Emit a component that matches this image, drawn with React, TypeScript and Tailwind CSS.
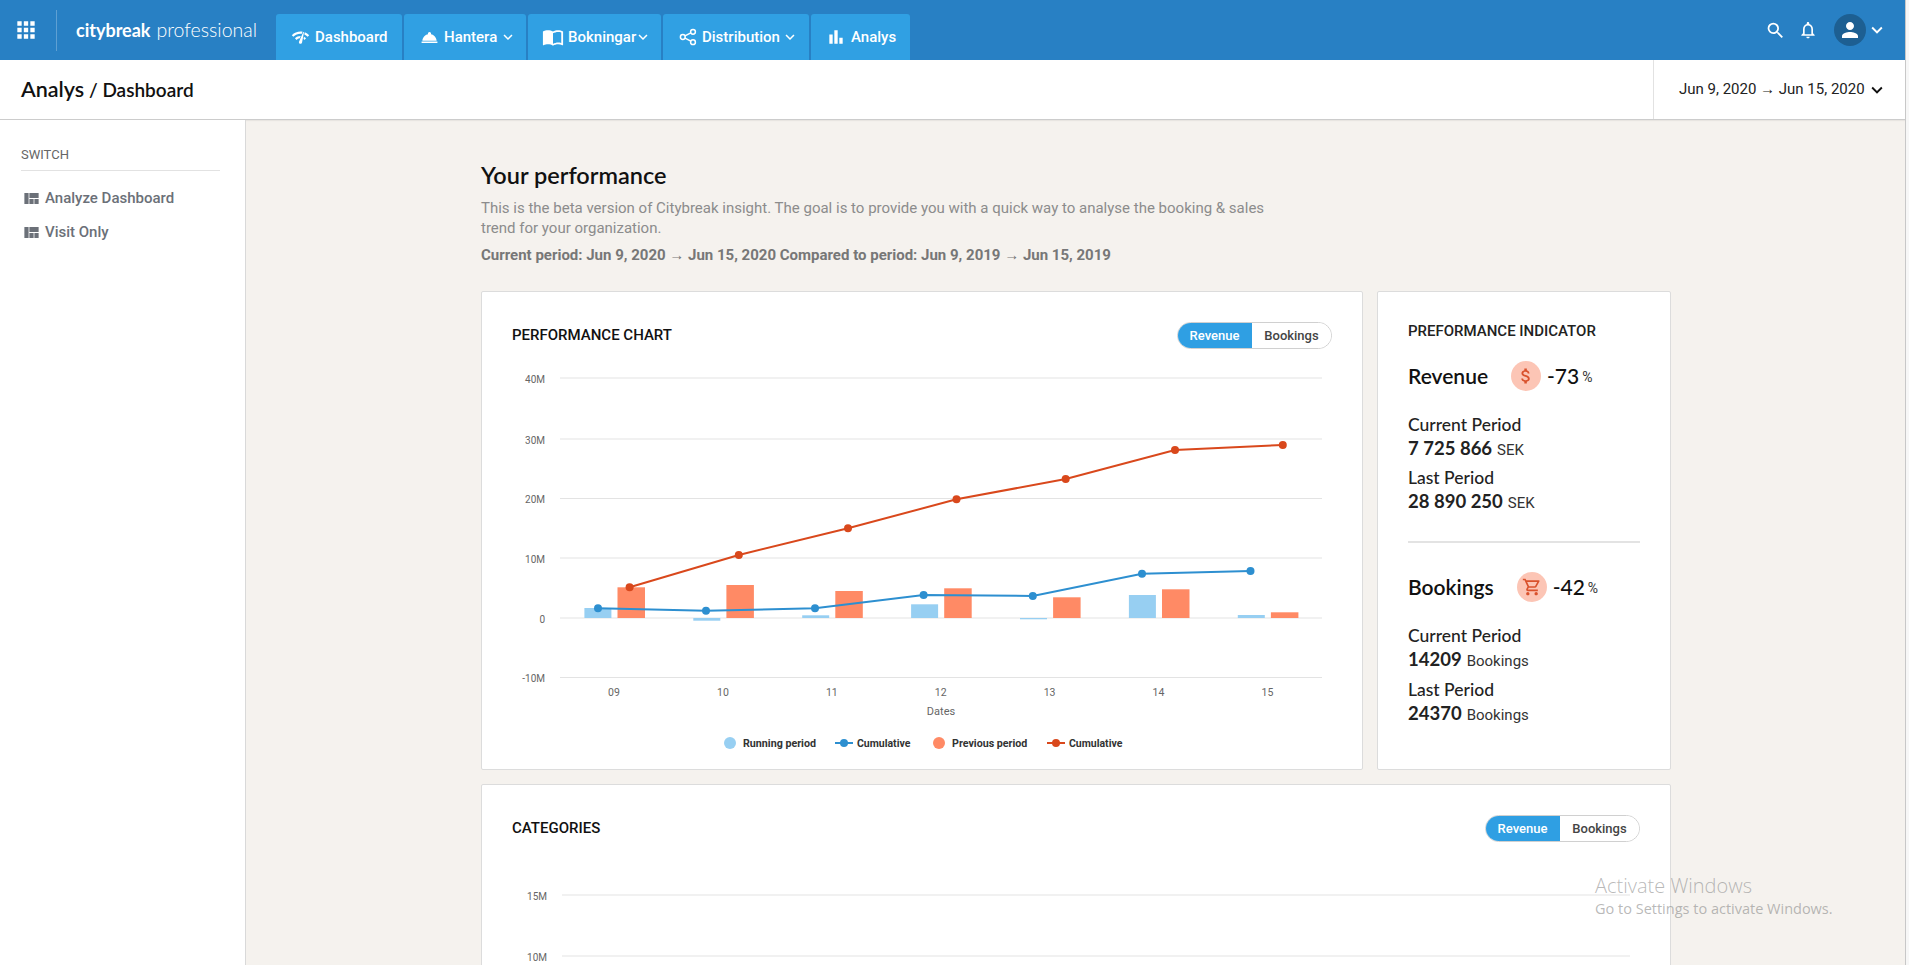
import {
  MdApps,
  MdAttachMoney,
  MdBarChart,
  MdImportContacts,
  MdKeyboardArrowDown,
  MdNetworkCheck,
  MdNotificationsNone,
  MdOutlineShoppingCart,
  MdPerson,
  MdRoomService,
  MdSearch,
  MdViewQuilt,
} from "react-icons/md"

function ShareIcon() {
  return (
    <svg viewBox="0 0 18 18" className="w-[18px] h-[18px]" fill="none" stroke="currentColor" strokeWidth="1.5">
      <circle cx="14" cy="3.8" r="2.4" />
      <circle cx="3.8" cy="9" r="2.4" />
      <circle cx="14" cy="14.2" r="2.4" />
      <line x1="6" y1="7.9" x2="11.8" y2="4.9" />
      <line x1="6" y1="10.1" x2="11.8" y2="13.1" />
    </svg>
  )
}

const tabs = [
  { label: "Dashboard", icon: <MdNetworkCheck className="w-[19px] h-[19px]" />, width: "w-[126px]", pad: "pl-[15px]", gap: "gap-[5px]", caret: "" },
  { label: "Hantera", icon: <MdRoomService className="w-[19px] h-[19px]" />, width: "w-[122px]", pad: "pl-[16px]", gap: "gap-[5px]", caret: "-ml-[3px]" },
  { label: "Bokningar", icon: <MdImportContacts className="w-[22px] h-[22px]" />, width: "w-[133px]", pad: "pl-[14px]", gap: "gap-[4px]", caret: "-ml-[6px]" },
  { label: "Distribution", icon: <ShareIcon />, width: "w-[146px]", pad: "pl-[16px]", gap: "gap-[5px]", caret: "-ml-[4px]" },
  { label: "Analys", icon: <MdBarChart className="w-[20px] h-[20px]" />, width: "w-[99px]", pad: "pl-[15px]", gap: "gap-[5px]", caret: "" },
]

const dropdowns = ["Hantera", "Bokningar", "Distribution"]

// y values are read straight off the reference chart
const blueBars = [608, 620.7, 615.3, 604.3, 619.3, 595, 615]
const redBars = [587.3, 585, 591, 588.3, 597.3, 589.3, 612.3]
const blueLine = [
  [598, 608.3],
  [706, 610.7],
  [815, 608.3],
  [923.6, 595],
  [1032.8, 596],
  [1142, 573.7],
  [1250.5, 571],
]
const redLine = [
  [629.6, 587.3],
  [738.8, 555],
  [848, 528.3],
  [956.5, 499.3],
  [1065.7, 479],
  [1175, 450],
  [1282.8, 445],
]
const yTicks = [
  { label: "40M", y: 378 },
  { label: "30M", y: 439 },
  { label: "20M", y: 498.5 },
  { label: "10M", y: 558 },
  { label: "0", y: 618 },
  { label: "-10M", y: 677.5 },
]
const dates = ["09", "10", "11", "12", "13", "14", "15"]

function Arrow() {
  return <span className="font-['Liberation_Sans',sans-serif]">→</span>
}

function Toggle() {
  return (
    <div className="flex h-[27px] rounded-full overflow-hidden border border-[#d0d0d0] text-[13px] font-medium">
      <div className="w-[75px] -my-px -ml-px flex items-center justify-center bg-[#2f9fe3] text-white">Revenue</div>
      <div className="w-[79px] flex items-center justify-center bg-white text-[#444]">Bookings</div>
    </div>
  )
}

function PerformanceChart() {
  const toPoints = (line: number[][]) => line.map((p) => p.join(",")).join(" ")

  return (
    <svg width="880" height="400" viewBox="482 360 880 400" className="block mt-[11px]">
      {yTicks.map((t) => (
        <g key={t.label}>
          <line x1="560" x2="1322" y1={t.y} y2={t.y} stroke="#e3e3e3" strokeWidth="1" />
          <text x="545" y={t.y + 4.5} textAnchor="end" fontSize="10" fill="#666">
            {t.label}
          </text>
        </g>
      ))}
      {blueBars.map((y, i) => {
        const top = Math.min(y, 618)
        return <rect key={i} x={584.4 + 108.9 * i} y={top} width="27" height={Math.abs(618 - y)} fill="#97cff2" />
      })}
      {redBars.map((y, i) => (
        <rect key={i} x={617.5 + 108.9 * i} y={y} width="27.5" height={618 - y} fill="#ff8a65" />
      ))}
      <polyline points={toPoints(blueLine)} fill="none" stroke="#2d8fd0" strokeWidth="2" />
      {blueLine.map((p, i) => (
        <circle key={i} cx={p[0]} cy={p[1]} r="4" fill="#2d8fd0" />
      ))}
      <polyline points={toPoints(redLine)} fill="none" stroke="#d9481c" strokeWidth="2" />
      {redLine.map((p, i) => (
        <circle key={i} cx={p[0]} cy={p[1]} r="4" fill="#d9481c" />
      ))}
      {dates.map((d, i) => (
        <text key={d} x={614 + 108.9 * i} y="696" textAnchor="middle" fontSize="10.5" fill="#666">
          {d}
        </text>
      ))}
      <text x="941" y="715" textAnchor="middle" fontSize="11" fill="#666">
        Dates
      </text>

      <circle cx="730" cy="743" r="6" fill="#97cff2" />
      <text x="743" y="747" fontSize="10.7" fontWeight="700" fill="#333">
        Running period
      </text>
      <line x1="835" x2="853" y1="743" y2="743" stroke="#2d8fd0" strokeWidth="2" />
      <circle cx="844" cy="743" r="4" fill="#2d8fd0" />
      <text x="857" y="747" fontSize="10.5" fontWeight="700" fill="#333">
        Cumulative
      </text>
      <circle cx="939" cy="743" r="6" fill="#ff8a65" />
      <text x="952" y="747" fontSize="10.7" fontWeight="700" fill="#333">
        Previous period
      </text>
      <line x1="1047" x2="1065" y1="743" y2="743" stroke="#d9481c" strokeWidth="2" />
      <circle cx="1056" cy="743" r="4" fill="#d9481c" />
      <text x="1069" y="747" fontSize="10.5" fontWeight="700" fill="#333">
        Cumulative
      </text>
    </svg>
  )
}

function CategoriesChart() {
  return (
    <svg width="1188" height="120" viewBox="482 860 1188 120" className="block mt-[18px]">
      {[
        { label: "15M", y: 895 },
        { label: "10M", y: 956 },
      ].map((t) => (
        <g key={t.label}>
          <line x1="562" x2="1630" y1={t.y} y2={t.y} stroke="#e3e3e3" strokeWidth="1" />
          <text x="547" y={t.y + 4.5} textAnchor="end" fontSize="10" fill="#666">
            {t.label}
          </text>
        </g>
      ))}
    </svg>
  )
}

function Indicator({ title, change, icon }: { title: string; change: string; icon: React.ReactNode }) {
  return (
    <div className="flex items-center h-[30px]">
      <span className="font-[Lato,sans-serif] text-[21px] font-semibold text-[#111]">{title}</span>
      <span className="ml-[23px] w-[30px] h-[30px] rounded-full bg-[#fcc5b5] flex items-center justify-center text-[#d9512c]">
        {icon}
      </span>
      <span className="ml-[6px] font-[Lato,sans-serif] text-[21px] font-medium text-[#111]">{change}</span>
      <span className="ml-[3px] mt-[2px] text-[14px] text-[#333]">%</span>
    </div>
  )
}

function Stat({ label, value, unit, mt }: { label: string; value: string; unit: string; mt: string }) {
  return (
    <div className={mt}>
      <div className="font-[Lato,sans-serif] text-[17.5px] font-medium leading-[20px] text-[#222]">{label}</div>
      <div className="mt-px flex items-baseline h-[24px] leading-[24px] text-[#222]">
        <span className="font-[Lato,sans-serif] text-[18.5px] font-bold">{value}</span>
        <span className="ml-[5px] text-[15px] text-[#333]">{unit}</span>
      </div>
    </div>
  )
}

export default function App() {
  return (
    <div className="relative flex h-[965px] overflow-hidden bg-[#f5f2ee] font-[Roboto,sans-serif]">
      <div className="flex-1 flex flex-col min-w-0">
        {/* Top bar */}
        <div className="flex items-end h-[60px] bg-[#2880c4] text-white">
          <div className="flex items-center self-stretch w-[276px]">
            <MdApps className="ml-[13px] w-[26px] h-[26px]" />
            <div className="ml-[17px] w-px h-[41px] bg-white/25" />
            <div className="ml-[19px] whitespace-nowrap font-[Lato,sans-serif]">
              <span className="text-[18px] font-bold">citybreak</span>
              <span className="ml-[6px] text-[19.5px] font-light">professional</span>
            </div>
          </div>
          <div className="flex gap-[2px]">
            {tabs.map((tab) => (
              <div
                key={tab.label}
                className={`flex items-center h-[46px] rounded-t-[3px] bg-[#30a0e3] text-[15px] font-medium ${tab.width} ${tab.pad} ${tab.gap}`}
              >
                {tab.icon}
                <span>{tab.label}</span>
                {dropdowns.includes(tab.label) && <MdKeyboardArrowDown className={`w-[18px] h-[18px] ${tab.caret}`} />}
              </div>
            ))}
          </div>
          <div className="ml-auto flex items-center self-stretch pr-[17px]">
            <MdSearch className="w-[21px] h-[21px]" />
            <MdNotificationsNone className="ml-[12px] w-[20px] h-[20px]" />
            <div className="ml-[16px] w-[32px] h-[32px] rounded-full bg-[#1d5f92] flex items-center justify-center">
              <MdPerson className="w-[24px] h-[24px]" />
            </div>
            <MdKeyboardArrowDown className="w-[22px] h-[22px]" />
          </div>
        </div>

        {/* Page title bar */}
        <div className="flex items-center h-[60px] bg-white border-b border-[#cccccc] shadow-[0_1px_1px_rgba(0,0,0,0.05)]">
          <div className="pl-[21px] pb-[1px] font-[Lato,sans-serif] font-semibold text-[#111]">
            <span className="text-[21.5px]">Analys</span>
            <span className="text-[19px]"> / Dashboard</span>
          </div>
          <div className="ml-auto self-stretch w-[252px] flex items-center pl-[25px] border-l border-[#e2e2e2] text-[15px] text-[#222]">
            <span className="whitespace-nowrap">
              Jun 9, 2020 <Arrow /> Jun 15, 2020
            </span>
            <MdKeyboardArrowDown className="ml-[1px] w-[22px] h-[22px] shrink-0 text-[#111]" />
          </div>
        </div>

        <div className="flex flex-1 min-h-0">
          {/* Sidebar */}
          <div className="w-[246px] shrink-0 bg-white border-r border-[#d9d9d9] pt-[27px] px-[21px]">
            <div className="text-[13px] leading-[16px] text-[#666]">SWITCH</div>
            <div className="mt-[7px] w-[199px] h-px bg-[#e2e2e2]" />
            <div className="mt-[17px] flex items-center h-[20px] text-[15px] font-medium text-[#6b7078]">
              <MdViewQuilt className="ml-[1px] w-[19px] h-[19px]" />
              <span className="ml-[4px]">Analyze Dashboard</span>
            </div>
            <div className="mt-[14px] flex items-center h-[20px] text-[15px] font-medium text-[#6b7078]">
              <MdViewQuilt className="ml-[1px] w-[19px] h-[19px]" />
              <span className="ml-[4px]">Visit Only</span>
            </div>
          </div>

          {/* Main content */}
          <div className="flex-1 min-w-0 pl-[235px] pt-[41px]">
            <h1 className="font-[Lato,sans-serif] text-[23.5px] leading-[28px] font-semibold text-[#111]">Your performance</h1>
            <p className="mt-[9px] w-[800px] text-[15px] leading-[20px] text-[#8c8c8c]">
              This is the beta version of Citybreak insight. The goal is to provide you with a quick way to analyse the booking &amp; sales trend for your organization.
            </p>
            <p className="mt-[7px] text-[15px] leading-[20px] font-bold text-[#777]">
              Current period: Jun 9, 2020 <Arrow /> Jun 15, 2020 Compared to period: Jun 9, 2019 <Arrow /> Jun 15, 2019
            </p>

            <div className="mt-[26px] flex gap-[14px] w-[1190px]">
              <div className="w-[882px] h-[479px] bg-white border border-[#dcdcdc] rounded-[2px]">
                <div className="flex items-center justify-between pt-[30px] pl-[30px] pr-[30px]">
                  <span className="text-[15px] font-medium text-[#111]">PERFORMANCE CHART</span>
                  <Toggle />
                </div>
                <PerformanceChart />
              </div>

              <div className="w-[294px] h-[479px] bg-white border border-[#dcdcdc] rounded-[2px] pt-[30px] px-[30px]">
                <div className="text-[15px] leading-[18px] font-medium text-[#222]">PREFORMANCE INDICATOR</div>
                <div className="mt-[21px]">
                  <Indicator title="Revenue" change="-73" icon={<MdAttachMoney className="w-[20px] h-[20px]" />} />
                </div>
                <Stat mt="mt-[24px]" label="Current Period" value="7 725 866" unit="SEK" />
                <Stat mt="mt-[8px]" label="Last Period" value="28 890 250" unit="SEK" />
                <div className="mt-[28px] h-[2px] w-[232px] bg-[#e3e3e3]" />
                <div className="mt-[29px]">
                  <Indicator title="Bookings" change="-42" icon={<MdOutlineShoppingCart className="w-[20px] h-[20px]" />} />
                </div>
                <Stat mt="mt-[24px]" label="Current Period" value="14209" unit="Bookings" />
                <Stat mt="mt-[9px]" label="Last Period" value="24370" unit="Bookings" />
              </div>
            </div>

            <div className="mt-[14px] w-[1190px] h-[300px] bg-white border border-[#dcdcdc] rounded-[2px]">
              <div className="flex items-center justify-between pt-[30px] pl-[30px] pr-[30px]">
                <span className="text-[15px] font-medium text-[#111]">CATEGORIES</span>
                <Toggle />
              </div>
              <CategoriesChart />
            </div>
          </div>
        </div>
      </div>

      {/* Edge of the browser window */}
      <div className="w-[4px] shrink-0 border-l border-[#c8c8c8] bg-[#f7f7f7]" />

      {/* Windows watermark */}
      <div className="absolute left-[1595px] top-[873px] text-[#8a8a8a]/60 font-['Open_Sans',sans-serif] whitespace-nowrap">
        <div className="text-[20px] leading-[26px] font-light">Activate Windows</div>
        <div className="text-[14.5px] leading-[18px] mt-[1px]">Go to Settings to activate Windows.</div>
      </div>
    </div>
  )
}
